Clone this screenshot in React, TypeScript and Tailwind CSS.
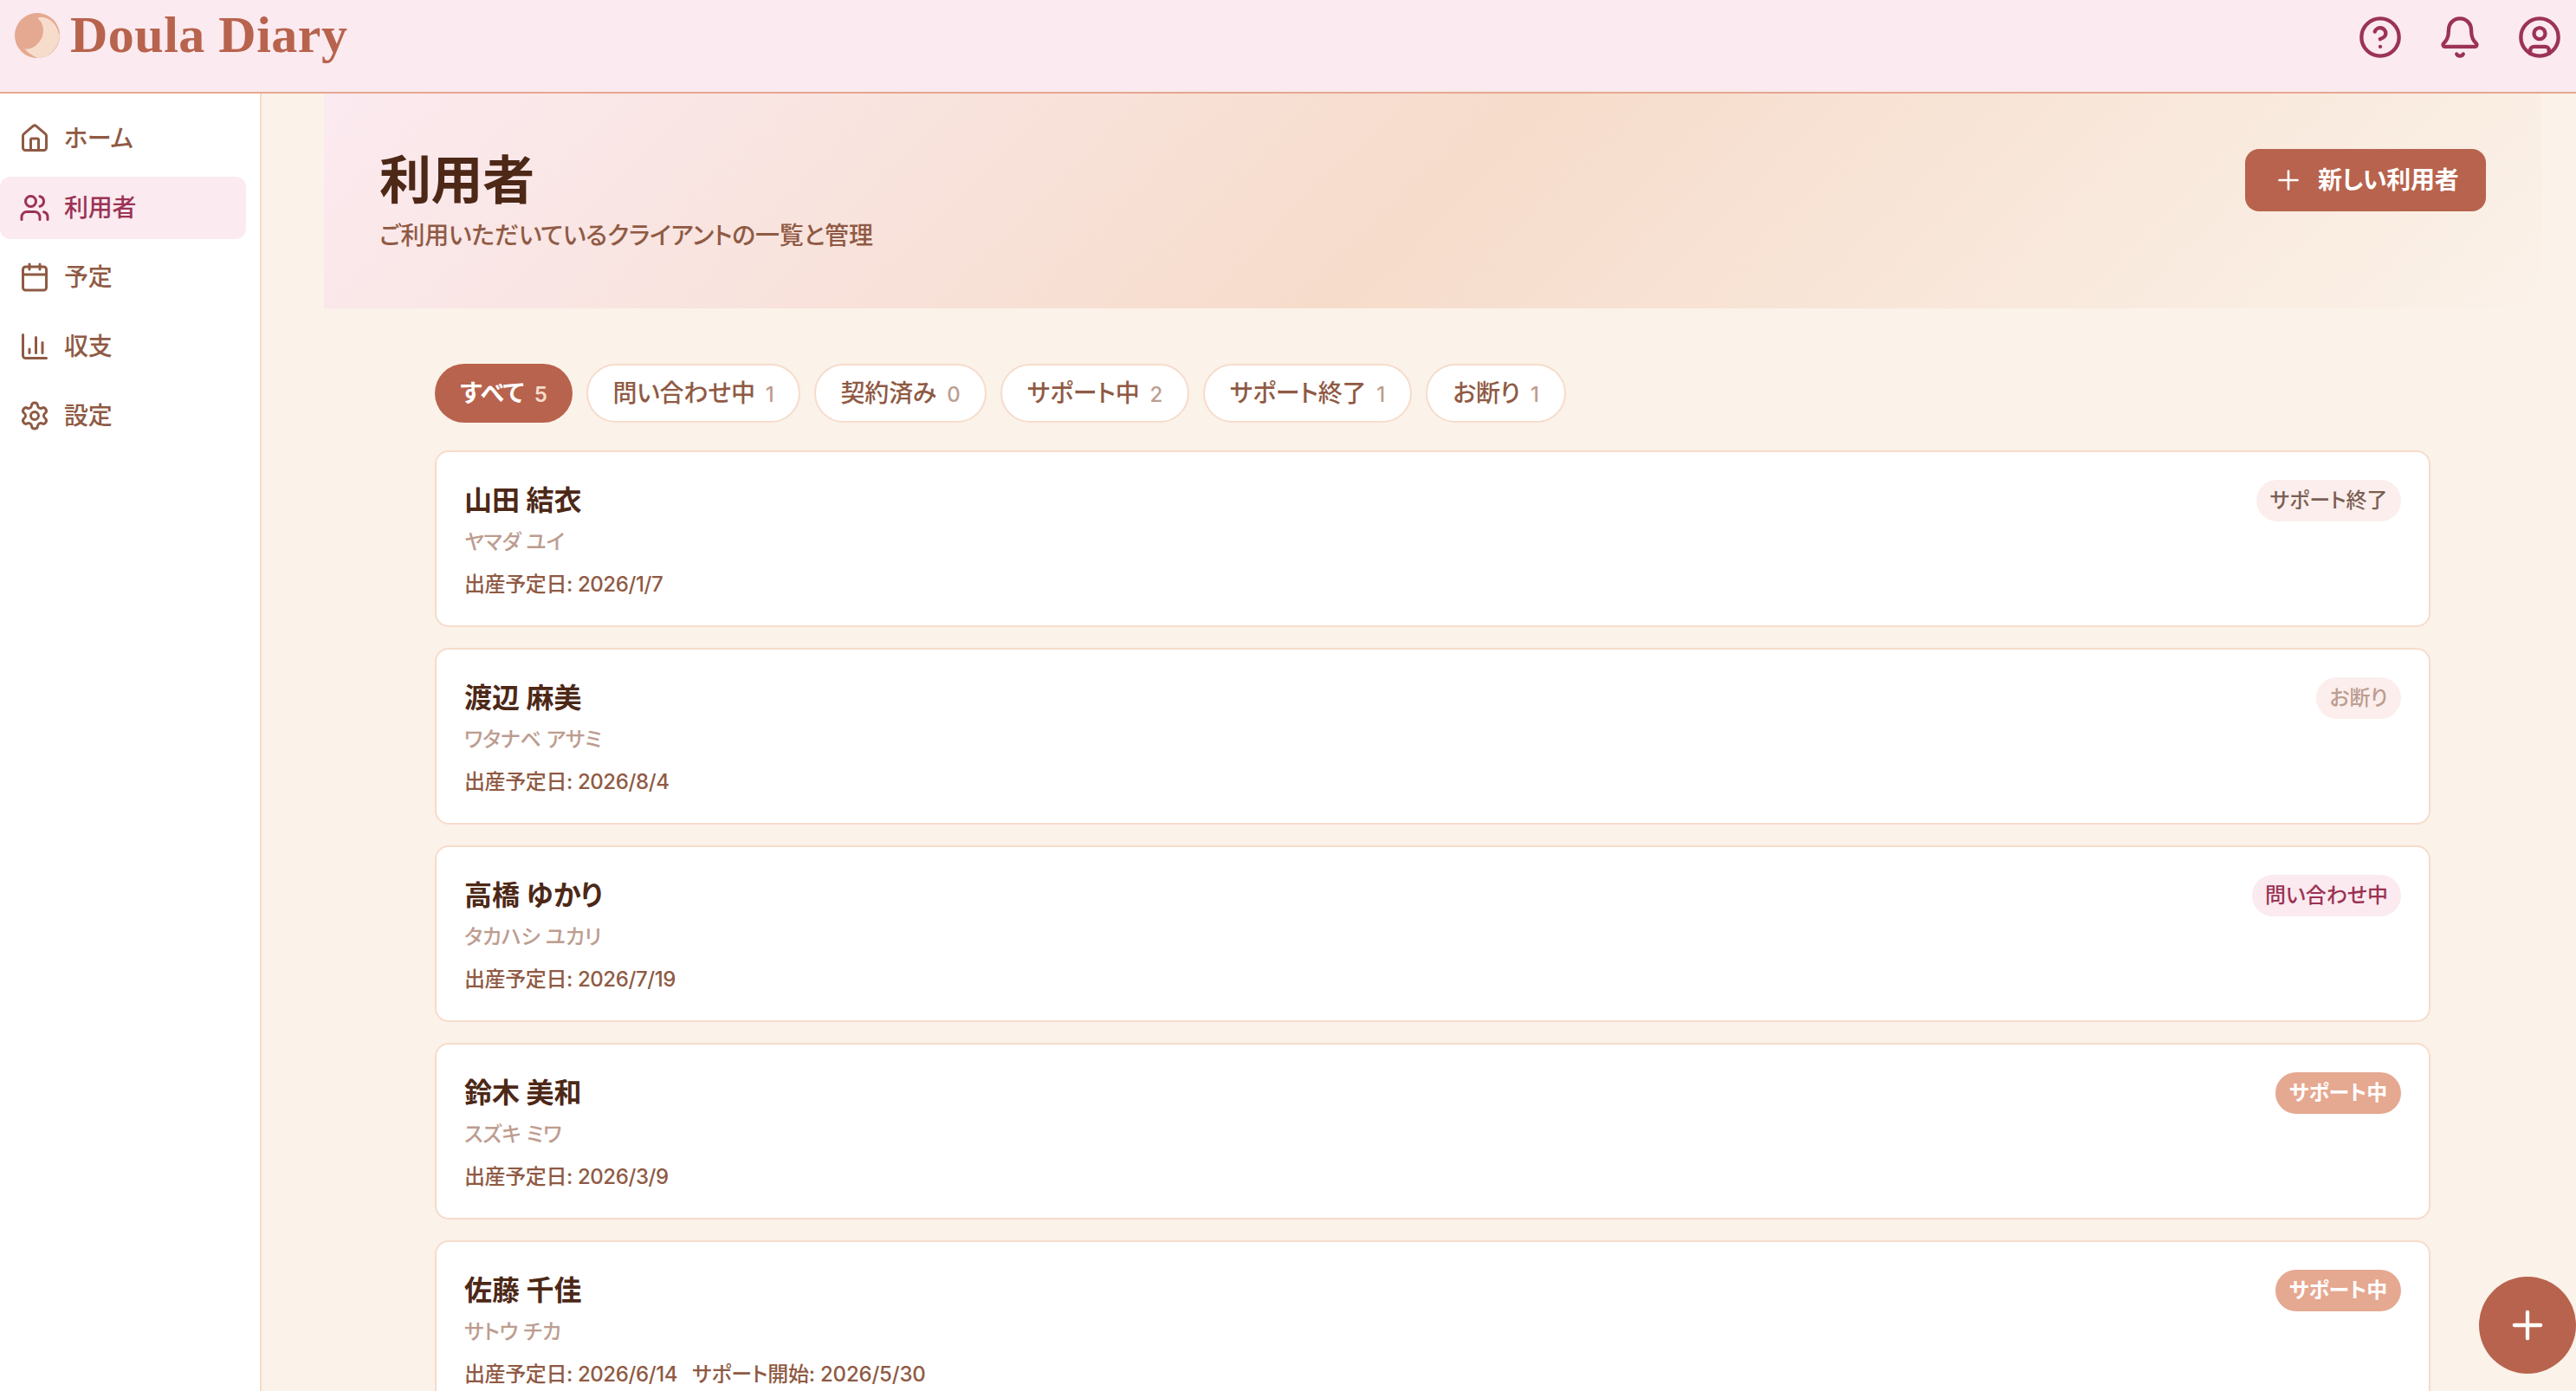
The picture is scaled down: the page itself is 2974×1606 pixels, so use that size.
import { FC } from "react";
import {
  Bell,
  Calendar,
  ChartColumn,
  CircleQuestionMark,
  CircleUser,
  House,
  LucideIcon,
  Plus,
  Settings,
  Users,
} from "lucide-react";
import clsx from "clsx";

interface NavItem {
  label: string;
  icon: LucideIcon;
  active?: boolean;
}

interface Filter {
  label: string;
  count: number;
  className: string;
  active?: boolean;
}

type Status = "inquiry" | "active" | "finished" | "declined";

interface Client {
  name: string;
  kana: string;
  dueDate: string;
  startDate?: string;
  status: Status;
}

const navItems: NavItem[] = [
  { label: "ホーム", icon: House },
  { label: "利用者", icon: Users, active: true },
  { label: "予定", icon: Calendar },
  { label: "収支", icon: ChartColumn },
  { label: "設定", icon: Settings },
];

const filters: Filter[] = [
  { label: "すべて", count: 5, className: "w-[159px]", active: true },
  { label: "問い合わせ中", count: 1, className: "w-[247px]" },
  { label: "契約済み", count: 0, className: "w-[199px]" },
  { label: "サポート中", count: 2, className: "w-[218px]" },
  { label: "サポート終了", count: 1, className: "w-[241px]" },
  { label: "お断り", count: 1, className: "w-[162px]" },
];

const clients: Client[] = [
  { name: "山田 結衣", kana: "ヤマダ ユイ", dueDate: "2026/1/7", status: "finished" },
  { name: "渡辺 麻美", kana: "ワタナベ アサミ", dueDate: "2026/8/4", status: "declined" },
  { name: "高橋 ゆかり", kana: "タカハシ ユカリ", dueDate: "2026/7/19", status: "inquiry" },
  { name: "鈴木 美和", kana: "スズキ ミワ", dueDate: "2026/3/9", status: "active" },
  {
    name: "佐藤 千佳",
    kana: "サトウ チカ",
    dueDate: "2026/6/14",
    startDate: "2026/5/30",
    status: "active",
  },
];

const statusLabels: Record<Status, string> = {
  inquiry: "問い合わせ中",
  active: "サポート中",
  finished: "サポート終了",
  declined: "お断り",
};

const statusStyles: Record<Status, string> = {
  inquiry: "w-[172px] bg-[#fbeaef] font-medium text-[#9b3355]",
  active: "w-[145px] bg-[#e5a890] font-bold text-white",
  finished: "w-[167px] bg-[#fbeeec] font-medium text-[#7a5f55]",
  declined: "w-[98px] bg-[#fbeeec] font-medium text-[#bd9d90]",
};

const Logo: FC = () => (
  <div className="flex items-center gap-3">
    <svg className="size-[52px]" viewBox="0 0 52 52" fill="none">
      <circle cx="26" cy="26" r="26" fill="#e5a890" />
      <path
        d="M26.7 5.5C34 3 43 8 47 14.500C49 17.500 50.200 20.500 50.600 23.500L51.800 24C52.400 38 41 52 26.500 52C20 49 15 46 11.500 41.200C16 42 21 40.500 25 37C33 30 35 20 31 11.500C30 9 27 7.500 26.700 5.500Z"
        fill="#f6dccb"
      />
    </svg>
    <span className="pb-0.5 font-['Liberation_Serif',serif] text-[60px] leading-12 font-bold tracking-[0.5px] whitespace-nowrap text-[#b8634d]">
      Doula Diary
    </span>
  </div>
);

const Header: FC = () => (
  <header className="flex h-27 shrink-0 items-start justify-between border-b-2 border-[#e5a890] bg-[#fbeaef] pr-4 pl-[17px]">
    <div className="pt-[15px]">
      <Logo />
    </div>
    <div className="flex gap-10 pt-[17px] text-[#9b3355]">
      <CircleQuestionMark className="size-13" />
      <Bell className="size-13" />
      <CircleUser className="size-13" />
    </div>
  </header>
);

const Sidebar: FC = () => (
  <nav className="flex w-[302px] shrink-0 flex-col gap-2 border-r-2 border-[#f6dccb] bg-white pt-4 pr-4">
    {navItems.map(({ label, icon: Icon, active }) => (
      <div
        key={label}
        className={clsx(
          "flex h-18 items-center gap-4 rounded-xl pl-[22px] text-[28px] font-medium tracking-[-0.2px]",
          active ? "bg-[#fbeaef] text-[#9b3355]" : "text-[#8f5a44]",
        )}
      >
        <Icon className="size-9" />
        {label}
      </div>
    ))}
  </nav>
);

const Hero: FC = () => (
  <section className="flex h-62 items-start justify-between bg-[linear-gradient(135deg,#fbeaf0_0%,#f6dccb_50%,#fbf2e9_100%)] p-16">
    <div>
      <h1 className="text-[60px] leading-[72px] font-bold tracking-[-0.4px] text-[#4d2817]">
        利用者
      </h1>
      <p className="mt-[7px] text-[28px] leading-[42px] font-medium tracking-[-0.2px] text-[#8f5a44]">
        ご利用いただいているクライアントの一覧と管理
      </p>
    </div>
    <button className="flex h-18 w-[278px] items-center gap-4 rounded-2xl bg-[#b8634d] pl-8 text-[28px] font-bold tracking-[-0.3px] whitespace-nowrap text-white">
      <Plus className="size-9" strokeWidth={1.75} />
      新しい利用者
    </button>
  </section>
);

const FilterTabs: FC = () => (
  <div className="flex gap-4">
    {filters.map(({ label, count, className, active }) => (
      <button
        key={label}
        className={clsx(
          className,
          "flex h-[68px] items-center justify-center gap-3 rounded-full text-[28px] tracking-[-0.2px] whitespace-nowrap",
          active
            ? "bg-[#b8634d] font-bold text-white"
            : "border-2 border-[#f6dccb] bg-white font-medium text-[#8f5a44]",
        )}
      >
        {label}
        <span
          className={clsx(
            "pt-[3px] text-2xl",
            active ? "font-semibold text-[#f6dccb]" : "font-medium text-[#bd9d90]",
          )}
        >
          {count}
        </span>
      </button>
    ))}
  </div>
);

const ClientCard: FC<{ client: Client }> = ({ client }) => (
  <li className="flex h-51 shrink-0 items-start justify-between rounded-2xl border-2 border-[#f6dccb] bg-white p-8">
    <div>
      <div className="text-[32px] leading-12 font-bold text-[#4d2817]">{client.name}</div>
      <div className="mt-1.5 text-2xl leading-9 font-medium tracking-[-0.25px] text-[#bd9d90]">
        {client.kana}
      </div>
      <div className="mt-[13px] flex gap-[17px] text-2xl leading-9 font-medium tracking-[-0.4px] text-[#8f5a44]">
        <span>出産予定日: {client.dueDate}</span>
        {client.startDate && (
          <span className="tracking-[-0.2px]">サポート開始: {client.startDate}</span>
        )}
      </div>
    </div>
    <span
      className={clsx(
        "flex h-12 items-center justify-center rounded-full text-2xl whitespace-nowrap",
        statusStyles[client.status],
      )}
    >
      {statusLabels[client.status]}
    </span>
  </li>
);

export default function App() {
  return (
    <div
      lang="ja"
      className="relative flex h-screen flex-col overflow-hidden bg-[#fbf2e9] font-['Inter','Noto_Sans_CJK_JP',sans-serif] [font-feature-settings:'palt']"
    >
      <Header />
      <div className="flex min-h-0 flex-1">
        <Sidebar />
        <main className="min-w-0 flex-1 overflow-hidden pr-10 pl-18">
          <Hero />
          <div className="px-32 pt-16">
            <FilterTabs />
            <ul className="mt-8 flex flex-col gap-6">
              {clients.map((client) => (
                <ClientCard key={client.name} client={client} />
              ))}
            </ul>
          </div>
        </main>
      </div>
      <button className="absolute right-0 bottom-5 flex size-28 items-center justify-center rounded-full bg-[#b8634d] text-white">
        <Plus className="size-13" />
      </button>
    </div>
  );
}
